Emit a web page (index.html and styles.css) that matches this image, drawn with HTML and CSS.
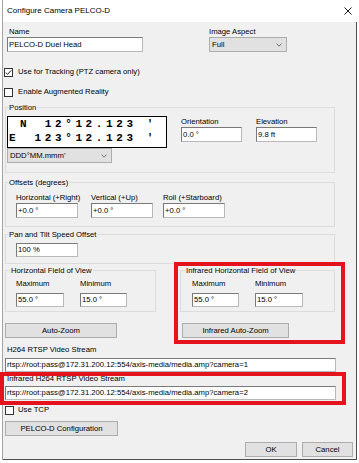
FILE: index.html
```html
<!DOCTYPE html>
<html>
<head>
<meta charset="utf-8">
<link rel="stylesheet" href="styles.css">
</head>
<body>
<div class="window">
  <div class="titlebar">
    <span class="title">Configure Camera PELCO-D</span>
    <svg class="close" viewBox="0 0 8 8"><path d="M0.5 0.5 L7.5 7.5 M7.5 0.5 L0.5 7.5" stroke="#000" stroke-width="0.9" fill="none"/></svg>
  </div>
  <div class="client">
    <div class="row row-top">
      <div class="field f-name"><div class="lbl">Name</div><div class="tb">PELCO-D Duel Head</div></div>
      <div class="field f-aspect"><div class="lbl">Image Aspect</div><div class="dd"><span>Full</span><svg viewBox="0 0 6 4"><path d="M0.5 0.6 L3 3.2 L5.5 0.6" fill="none" stroke="#555" stroke-width="0.8"/></svg></div></div>
    </div>
    <div class="check c1"><span class="box"><svg viewBox="0 0 7 7"><path d="M0.8 3.6 L2.6 5.4 L6.2 1.4" stroke="#000" stroke-width="0.9" fill="none"/></svg></span><span>Use for Tracking (PTZ camera only)</span></div>
    <div class="check c2"><span class="box"></span><span>Enable Augmented Reality</span></div>

    <fieldset class="grp g-pos"><legend>Position</legend>
      <div class="pos-in">
        <div class="pos-left">
          <div class="coord">
            <div class="cline"><span class="dir dir-n">N</span><span class="num">12°12.123 '</span></div>
            <div class="cline"><span class="dir">E</span><span class="num">123°12.123 '</span></div>
          </div>
          <div class="dd dd-fmt"><span>DDD°MM.mmm'</span><svg viewBox="0 0 6 4"><path d="M0.5 0.6 L3 3.2 L5.5 0.6" fill="none" stroke="#555" stroke-width="0.8"/></svg></div>
        </div>
        <div class="field f-orient"><div class="lbl">Orientation</div><div class="tb">0.0 °</div></div>
        <div class="field f-elev"><div class="lbl">Elevation</div><div class="tb">9.8 ft</div></div>
      </div>
    </fieldset>

    <fieldset class="grp g-off"><legend>Offsets (degrees)</legend>
      <div class="off-in">
        <div class="field f-h"><div class="lbl">Horizontal (+Right)</div><div class="tb">+0.0 °</div></div>
        <div class="field f-v"><div class="lbl">Vertical (+Up)</div><div class="tb">+0.0 °</div></div>
        <div class="field f-r"><div class="lbl">Roll (+Starboard)</div><div class="tb">+0.0 °</div></div>
      </div>
    </fieldset>

    <fieldset class="grp g-pan"><legend>Pan and Tilt Speed Offset</legend>
      <div class="pan-in"><div class="tb tb14">100 %</div></div>
    </fieldset>

    <div class="fov-row">
      <fieldset class="grp g-fov"><legend>Horizontal Field of View</legend>
        <div class="fov-in">
          <div class="field f-max"><div class="lbl">Maximum</div><div class="tb tb14 w48">55.0 °</div></div>
          <div class="field f-min"><div class="lbl">Minimum</div><div class="tb tb14 w47">15.0 °</div></div>
        </div>
      </fieldset>
      <fieldset class="grp g-irfov"><legend>Infrared Horizontal Field of View</legend>
        <div class="fov-in">
          <div class="field f-max"><div class="lbl">Maximum</div><div class="tb tb14 w47">55.0 °</div></div>
          <div class="field f-min"><div class="lbl">Minimum</div><div class="tb tb14 w48">15.0 °</div></div>
        </div>
      </fieldset>
    </div>

    <div class="btn-row">
      <div class="btn b-auto">Auto-Zoom</div>
      <div class="btn b-irauto">Infrared Auto-Zoom</div>
    </div>

    <div class="lbl lbl-url">H264 RTSP Video Stream</div>
    <div class="tb tb14 tb-url">rtsp://root:pass@172.31.200.12:554/axis-media/media.amp?camera=1</div>
    <div class="lbl lbl-url2">Infrared H264 RTSP Video Stream</div>
    <div class="tb tb14 tb-url2">rtsp://root:pass@172.31.200.12:554/axis-media/media.amp?camera=2</div>

    <div class="check c3"><span class="box"></span><span>Use TCP</span></div>
    <div class="btn b-pelco">PELCO-D Configuration</div>

    <div class="ok-row">
      <div class="btn b-ok">OK</div>
      <div class="btn b-cancel">Cancel</div>
    </div>
  </div>
</div>
<div class="mark mark1"></div>
<div class="mark mark2"></div>
</body>
</html>
```

FILE: styles.css
```css
* { box-sizing: border-box; }
html, body { margin: 0; padding: 0; background: #fff; }
body {
  font-family: "Liberation Sans", Arial, sans-serif;
  font-size: 7.7px;
  color: #000;
  position: relative;
  width: 359px;
  height: 463px;
  overflow: hidden;
}
.window {
  margin-left: 2px;
  width: 355px;
  height: 460px;
  border-left: 1px solid #a3a3a3;
  display: flex;
  flex-direction: column;
}
.titlebar {
  height: 22px;
  flex: none;
  background: #fff;
  display: flex;
  align-items: center;
  justify-content: space-between;
  padding: 0 5px 0 4px;
}
.title { font-size: 8px; line-height: 10px; }
.close { width: 8px; height: 8px; display: block; }
.client {
  flex: 1;
  background: #f0f0f0;
  border-right: 1px solid #4f4f4f;
  border-bottom: 1px solid #4f4f4f;
  display: flex;
  flex-direction: column;
  align-items: flex-start;
}
.lbl { line-height: 10px; white-space: nowrap; }
.field { display: flex; flex-direction: column; }
.tb {
  height: 15px;
  background: #fff;
  border: 1px solid;
  border-color: #7a7a7a #b9b9b9 #b9b9b9 #7a7a7a;
  padding-left: 1px;
  line-height: 13px;
  white-space: nowrap;
  overflow: hidden;
}
.tb14 { height: 14px; line-height: 12px; }
.w48 { width: 48px; }
.w47 { width: 47px; }
.dd {
  height: 15px;
  background: #e1e1e1;
  border: 1px solid #adadad;
  padding-left: 2px;
  line-height: 13px;
  display: flex;
  justify-content: space-between;
  align-items: center;
  white-space: nowrap;
}
.dd svg { width: 6px; height: 4px; margin-right: 4px; display: block; }
.btn {
  height: 15px;
  background: #e1e1e1;
  border: 1px solid #adadad;
  text-align: center;
  line-height: 13px;
  white-space: nowrap;
}
.row { display: flex; }
.row-top { margin-top: 5px; }
.f-name { margin-left: 4px; width: 136px; }
.f-name .lbl { padding-left: 2px; }
.f-aspect { margin-left: 66px; width: 78px; }

.check { display: flex; align-items: center; height: 10px; margin-left: 1px; line-height: 10px; white-space: nowrap; }
.check .box {
  width: 9px; height: 9px; flex: none;
  background: #fff;
  border: 1px solid #333;
  margin-right: 5px;
  display: flex;
}
.check .box svg { width: 7px; height: 7px; display: block; }
.c1 { margin-top: 15px; }
.c2 { margin-top: 10px; }
.c3 { margin-top: 5px; margin-left: 2px; }
.c3 .box { margin-right: 4px; }

.grp {
  margin: 0;
  margin-left: 2px;
  padding: 0;
  border: 1px solid #dcdcdc;
  min-width: 0;
}
.grp legend { padding: 0 1px; line-height: 9px; margin-left: 2px; white-space: nowrap; }
.g-pos { margin-top: 6px; width: 330px; }
.pos-in { display: flex; align-items: flex-start; padding: 4px 0 9px 1px; }
.coord {
  width: 160px;
  height: 32px;
  background: #fff;
  border: 1px solid #000;
  font-family: "Liberation Mono", "Courier New", monospace;
  font-weight: bold;
  font-size: 11px;
  padding: 0 9px 0 0;
}
.cline { display: flex; justify-content: space-between; height: 14px; line-height: 14px; white-space: pre; }
.cline .num { letter-spacing: 3.6px; }
.dir { padding-left: 1px; }
.dir-n { margin-left: 11px; }
.dd-fmt { width: 105px; }
.f-orient, .f-elev { margin-left: 14px; margin-top: 1px; width: 61px; }

.g-off { margin-top: 5px; width: 330px; }
.off-in { display: flex; padding: 6px 0 8px 10px; }
.f-h { width: 75px; }
.f-v { width: 72px; }
.f-r { width: 62px; }
.off-in .tb { width: 62px; }

.g-pan { margin-top: 3px; width: 330px; }
.pan-in { padding: 4px 0 6px 10px; }
.pan-in .tb { width: 62px; }

.fov-row { display: flex; align-items: flex-start; margin-top: 2px; }
.g-fov { width: 151px; }
.g-fov legend, .g-irfov legend { margin-left: 4px; }
.fov-in { display: flex; padding: 4px 0 4px 10px; }
.fov-in .lbl { margin-bottom: 4px; }
.f-max { width: 64px; }
.g-irfov { width: 155px; margin-left: 24px; }
.g-irfov .fov-in { padding-left: 11px; }
.g-irfov .f-max { width: 63px; }

.btn-row { display: flex; margin-top: 11px; }
.b-auto { margin-left: 2px; width: 112px; }
.b-irauto { margin-left: 65px; width: 107px; }

.lbl-url { margin-top: 7px; padding-left: 4px; }
.tb-url { margin-left: 2px; width: 331px; margin-top: 3px; }
.lbl-url2 { margin-top: 2px; padding-left: 4px; }
.tb-url2 { margin-left: 2px; width: 331px; margin-top: 2px; }

.b-pelco { margin-top: 6px; margin-left: 2px; width: 113px; }
.ok-row {
  align-self: stretch;
  display: flex;
  justify-content: flex-end;
  gap: 5px;
  margin-top: 6px;
  padding-right: 3px;
}
.b-ok { width: 52px; }
.b-cancel { width: 51px; }

.mark { position: absolute; border: 4px solid #e5131d; }
.mark1 { left: 174px; top: 262px; width: 171px; height: 82px; }
.mark2 { left: 0; top: 372px; width: 346px; height: 33px; }
```
